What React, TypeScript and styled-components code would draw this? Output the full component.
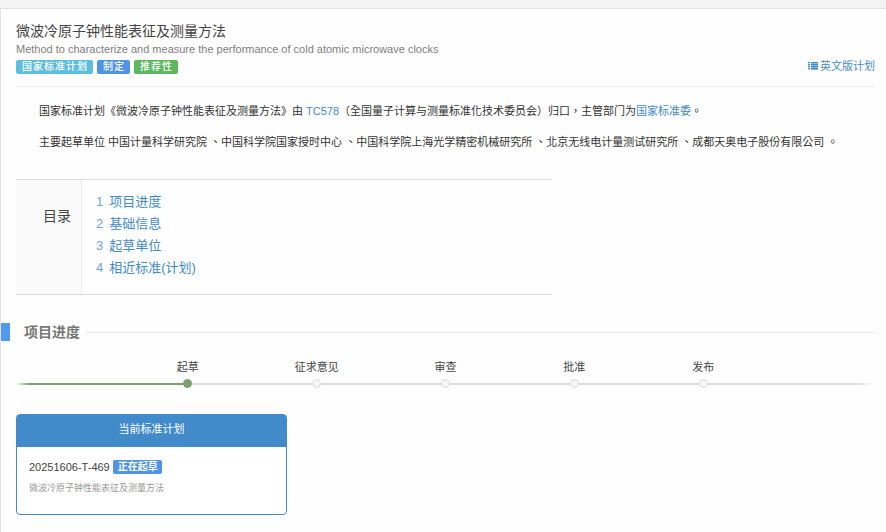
import React from "react";
import styled, { createGlobalStyle } from "styled-components";

const GlobalStyle = createGlobalStyle`
  *, *::before, *::after { box-sizing: border-box; }
  body {
    margin: 0;
    background: #f3f3f3;
    color: #444;
    font-family: "Liberation Sans", "Noto Sans CJK SC", sans-serif;
    font-size: 11px;
    line-height: 16px;
  }
  h1, h2, h3, p, ol { margin: 0; padding: 0; }
`;

const Page = styled.div`
  min-height: 100vh;
  padding-top: 8px;
  display: flex;
`;

const Panel = styled.main`
  flex: 1;
  min-width: 0;
  padding: 12px 11px 17px 15px;
  background: #fefefe;
  border-top: 1px solid #e2e2e2;
  border-left: 1px solid #e2e2e2;
`;

const Link = styled.a`
  color: #428bca;
  text-decoration: none;
  &:hover { text-decoration: underline; }
`;

const Header = styled.header`
  display: flex;
  justify-content: space-between;
  align-items: flex-end;
  padding-bottom: 12px;
  border-bottom: 1px solid #eee;
`;

const Title = styled.h1`
  font-size: 14px;
  line-height: 20px;
  font-weight: 400;
`;

const Subtitle = styled.p`
  line-height: 16px;
  color: #808080;
`;

const Badges = styled.div`
  display: flex;
  gap: 4px;
  padding-top: 3px;
`;

const Badge = styled.span<{ $color: string; $strong?: boolean }>`
  display: block;
  height: 14px;
  padding: 0 ${(p) => (p.$strong ? "4px" : "5px")} 0 ${(p) => (p.$strong ? "5px" : "6px")};
  border-radius: 2px;
  background: ${(p) => p.$color};
  color: #fff;
  font-size: 10px;
  line-height: 13px;
  font-weight: ${(p) => (p.$strong ? 700 : 500)};
  letter-spacing: ${(p) => (p.$strong ? "0" : "1px")};
`;

const PlanLink = styled(Link)`
  display: flex;
  align-items: center;
  gap: 2px;
`;

const Intro = styled.div`
  padding: 16px 0 0 23px;
  color: #333;
  font-family: "Liberation Sans", "Noto Sans CJK TC", sans-serif;
`;

const Paragraph = styled.p`
  margin-bottom: 15px;
`;

const Contents = styled.nav`
  display: flex;
  max-width: 536px;
  margin-top: 29px;
  border-top: 1px solid #ddd;
  border-bottom: 1px solid #ddd;
`;

const ContentsTitle = styled.h2`
  width: 66px;
  padding: 26px 10px 0 0;
  background: #fafafa;
  border-right: 1px solid #eee;
  font-size: 14px;
  line-height: 20px;
  font-weight: 400;
  text-align: right;
`;

const ContentsList = styled.ol`
  list-style: none;
  padding: 11px 0 15px 14px;
  font-size: 13px;
  line-height: 22px;
`;

const ContentsLink = styled(Link)`
  display: flex;
  gap: 6px;
`;

const ContentsNumber = styled.span`
  color: #6fa5d8;
`;

const SectionHeading = styled.div`
  display: flex;
  align-items: center;
  margin: 27px 0 0 -15px;
`;

const Marker = styled.span`
  width: 9px;
  height: 18px;
  background: #4f9aec;
`;

const SectionTitle = styled.h2`
  padding: 0 6px 0 14px;
  color: #777;
  font-size: 14px;
  line-height: 20px;
  font-weight: 700;
`;

const Rule = styled.span`
  flex: 1;
  height: 1px;
  background: #e8e8e8;
`;

const Timeline = styled.ol`
  list-style: none;
  display: grid;
  grid-template-columns: 25fr repeat(5, 30fr) 25fr;
  margin-top: 17px;
  background:
    linear-gradient(90deg, transparent, #7d9f72 8%) 0 24px / 20% 2px no-repeat,
    linear-gradient(90deg, transparent, #ddd 2%, #ddd 98%, transparent) 0 24px / 100% 2px no-repeat;
`;

const Step = styled.li<{ $active?: boolean }>`
  display: flex;
  flex-direction: column;
  align-items: center;
  gap: 4px;
  &:first-child { grid-column-start: 2; }
  &::after {
    content: "";
    width: 9px;
    height: 9px;
    border-radius: 50%;
    background: ${(p) => (p.$active ? "#7d9f72" : "#f6f6f6")};
    border: 1px solid ${(p) => (p.$active ? "#7d9f72" : "#ddd")};
  }
`;

const Card = styled.section`
  max-width: 271px;
  margin-top: 26px;
  border: 1px solid #428bca;
  border-radius: 4px;
  background: #fff;
`;

const CardTitle = styled.h3`
  padding: 6px 12px 10px;
  background: #428bca;
  color: #fff;
  font-size: 11px;
  line-height: 16px;
  font-weight: 400;
  text-align: center;
`;

const CardBody = styled.div`
  padding: 12px 12px 18px;
`;

const PlanRow = styled.div`
  display: flex;
  align-items: center;
  gap: 3px;
`;

const PlanName = styled.p`
  margin-top: 5px;
  color: #999;
  font-size: 9px;
  line-height: 16px;
`;

const ListIcon = () => (
  <svg width="10" height="10" viewBox="0 0 10 10" fill="currentColor" aria-hidden="true">
    {[1, 3, 5, 7].map((y) => (
      <g key={y}>
        <rect x="0" y={y} width="2" height="1" />
        <rect x="3" y={y} width="7" height="1" />
      </g>
    ))}
    <rect x="0" y="1" width="2" height="8" opacity="0.35" />
    <rect x="3" y="1" width="7" height="8" opacity="0.6" />
  </svg>
);

const sections = ["项目进度", "基础信息", "起草单位", "相近标准(计划)"];
const steps = ["起草", "征求意见", "审查", "批准", "发布"];

export default function App() {
  return (
    <Page lang="zh-CN">
      <GlobalStyle />
      <Panel>
        <Header>
          <div>
            <Title>微波冷原子钟性能表征及测量方法</Title>
            <Subtitle>
              Method to characterize and measure the performance of cold atomic microwave clocks
            </Subtitle>
            <Badges>
              <Badge $color="#5bc0de">国家标准计划</Badge>
              <Badge $color="#4f94e8">制定</Badge>
              <Badge $color="#5cb85c">推荐性</Badge>
            </Badges>
          </div>
          <PlanLink href="#english">
            <ListIcon />
            英文版计划
          </PlanLink>
        </Header>

        <Intro lang="zh-TW">
          <Paragraph>
            国家标准计划《微波冷原子钟性能表征及测量方法》由 <Link href="#tc578">TC578</Link>
            （全国量子计算与测量标准化技术委员会）归口，主管部门为
            <Link href="#sac">国家标准委</Link>。
          </Paragraph>
          <Paragraph>
            主要起草单位 中国计量科学研究院 、中国科学院国家授时中心 、中国科学院上海光学精密机械研究所 、北京无线电计量测试研究所 、成都天奥电子股份有限公司 。
          </Paragraph>
        </Intro>

        <Contents aria-label="目录">
          <ContentsTitle>目录</ContentsTitle>
          <ContentsList>
            {sections.map((name, i) => (
              <li key={name}>
                <ContentsLink href={`#section-${i + 1}`}>
                  <ContentsNumber>{i + 1}</ContentsNumber>
                  {name}
                </ContentsLink>
              </li>
            ))}
          </ContentsList>
        </Contents>

        <SectionHeading id="section-1">
          <Marker />
          <SectionTitle>项目进度</SectionTitle>
          <Rule />
        </SectionHeading>

        <Timeline>
          {steps.map((name, i) => (
            <Step key={name} $active={i === 0}>
              {name}
            </Step>
          ))}
        </Timeline>

        <Card>
          <CardTitle>当前标准计划</CardTitle>
          <CardBody>
            <PlanRow>
              20251606-T-469
              <Badge $color="#4f94e8" $strong>
                正在起草
              </Badge>
            </PlanRow>
            <PlanName>微波冷原子钟性能表征及测量方法</PlanName>
          </CardBody>
        </Card>
      </Panel>
    </Page>
  );
}
